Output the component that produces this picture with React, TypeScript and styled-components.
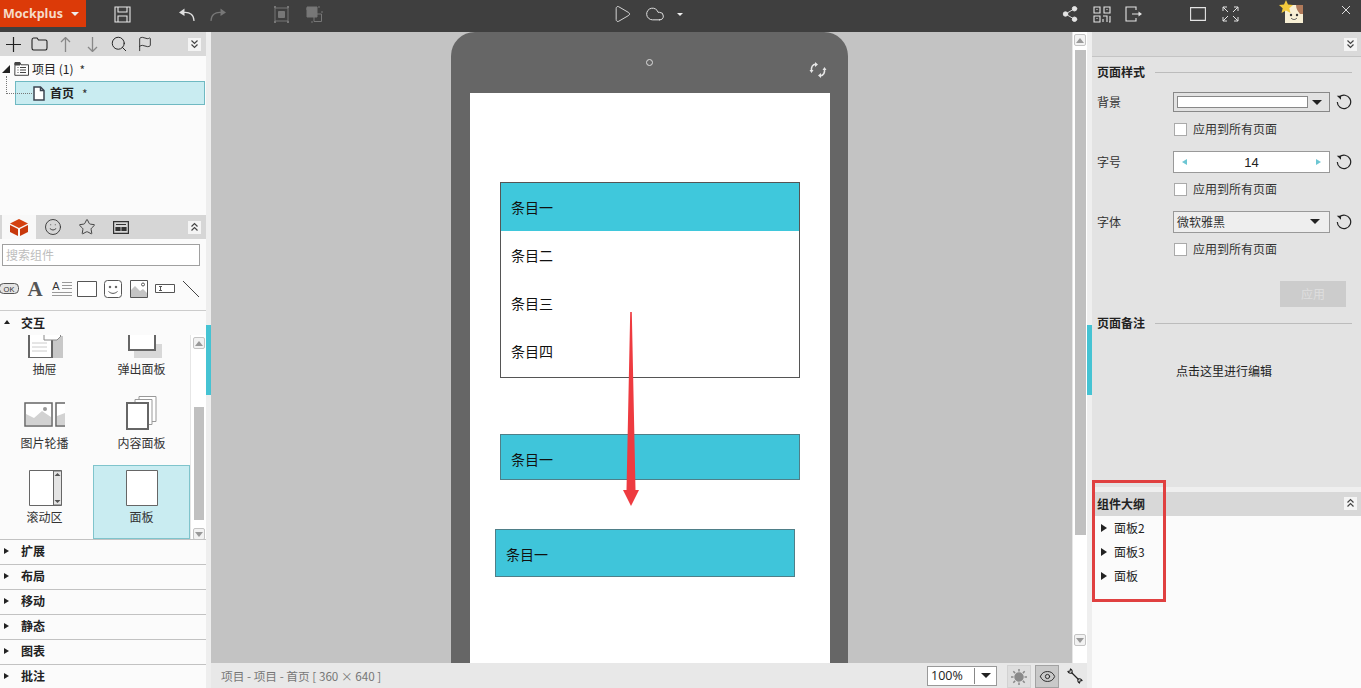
import React from "react";
import styled, { createGlobalStyle } from "styled-components";
import { Flag, Search, Share2, Smile, Star, Eye, Play, Cloud } from "lucide-react";

const GlobalStyle = createGlobalStyle`
  html, body {
    margin: 0;
    padding: 0;
    overflow: hidden;
    background: #c3c3c3;
  }
  * {
    box-sizing: border-box;
  }
  body {
    font-family: "Noto Sans CJK SC", "Liberation Sans", sans-serif;
    font-size: 12px;
    color: #222;
  }
`;

const Page = styled.div`
  width: 1361px;
  height: 688px;
  display: flex;
  flex-direction: column;
  overflow: hidden;
`;

const TopBar = styled.header`
  height: 32px;
  flex: none;
  background: #3f3f3f;
  display: flex;
  align-items: center;
  padding-bottom: 4px;
`;

const Logo = styled.div`
  width: 86px;
  height: 27px;
  align-self: flex-start;
  background: #dc3a08;
  color: #f6dcc8;
  font-family: "Open Sans", "Liberation Sans", sans-serif;
  font-weight: 700;
  font-size: 12.5px;
  display: flex;
  align-items: center;
  padding-left: 3px;
  gap: 8px;
`;

const Caret = styled.span<{ $color?: string; $size?: number }>`
  width: 0;
  height: 0;
  border-left: ${(p) => p.$size ?? 4}px solid transparent;
  border-right: ${(p) => p.$size ?? 4}px solid transparent;
  border-top: ${(p) => p.$size ?? 4}px solid ${(p) => p.$color ?? "#eee"};
`;

const TopSlot = styled.div<{ $ml: number }>`
  width: 24px;
  height: 24px;
  margin-left: ${(p) => p.$ml}px;
  display: flex;
  align-items: center;
  justify-content: center;
  svg {
    overflow: visible;
  }
`;

const Body = styled.div`
  flex: 1;
  min-height: 0;
  display: flex;
`;

const LeftPanel = styled.aside`
  width: 206px;
  flex: none;
  background: #fbfbfb;
  display: flex;
  flex-direction: column;
`;

const Splitter = styled.div`
  width: 5px;
  flex: none;
  background: #eeeeee;
  position: relative;
`;

const SplitterMark = styled.div`
  position: absolute;
  left: 0;
  top: 293px;
  width: 5px;
  height: 70px;
  background: #45c3d3;
`;

const ToolRow = styled.div`
  height: 24px;
  flex: none;
  background: #d9d9d9;
  display: flex;
  align-items: center;
  padding-left: 2px;
  gap: 4.4px;
`;

const ToolSlot = styled.div`
  width: 22px;
  height: 22px;
  display: flex;
  align-items: center;
  justify-content: center;
`;

const CollapseBtn = styled.div<{ $mr?: number }>`
  width: 13px;
  height: 13px;
  background: #f4f4f4;
  margin-left: auto;
  margin-right: ${(p) => p.$mr ?? 5}px;
  display: flex;
  align-items: center;
  justify-content: center;
`;

const Tree = styled.div`
  height: 159px;
  flex: none;
  padding-top: 5px;
  position: relative;
`;

const TreeConnector = styled.div`
  position: absolute;
  left: 6px;
  top: 20px;
  width: 26px;
  height: 18px;
  border-left: 1px dotted #777;
  border-bottom: 1px dotted #777;
`;

const TreeRow = styled.div`
  height: 16px;
  display: flex;
  align-items: center;
  padding-left: 2px;
`;

const TreeFolder = styled.span`
  margin-left: 4px;
  display: flex;
`;

const TreeLabel = styled.span`
  margin: -2px 0 0 3px;
  font-size: 12px;
`;

const Mark = styled.span<{ $ml: number }>`
  margin-left: ${(p) => p.$ml}px;
  font-size: 12px;
  color: #333;
`;

const TreeSelected = styled.div`
  height: 24px;
  width: 190px;
  margin: 4px 0 0 15px;
  background: #c9ecf1;
  border: 1px solid #6fb9c2;
  display: flex;
  align-items: center;
  padding-left: 17px;
`;

const TreeSelectedLabel = styled.span`
  margin: -2px 0 0 5px;
  font-weight: 700;
`;

const TabRow = styled.div`
  height: 24px;
  flex: none;
  background: #d6d6d6;
  display: flex;
  align-items: center;
  padding-left: 2px;
`;

const Tab = styled.div<{ $active?: boolean }>`
  width: 34px;
  height: 24px;
  background: ${(p) => (p.$active ? "#f8f8f8" : "transparent")};
  display: flex;
  align-items: center;
  justify-content: center;
`;

const SearchBox = styled.div`
  height: 22px;
  width: 198px;
  flex: none;
  margin: 5px 0 0 2px;
  padding: 0 0 2px 3px;
  background: #fff;
  border: 1px solid #a0a0a0;
  color: #bdbdbd;
  font-size: 12px;
  display: flex;
  align-items: center;
`;

const PaletteRow = styled.div`
  height: 45px;
  flex: none;
  margin-left: -4px;
  display: flex;
  align-items: center;
  padding-top: 1px;
  border-bottom: 1px solid #cccccc;
`;

const PaletteSlot = styled.div`
  width: 26px;
  height: 26px;
  flex: none;
  display: flex;
  align-items: center;
  justify-content: center;
`;

const GroupTitle = styled.div`
  height: 24px;
  flex: none;
  display: flex;
  align-items: center;
  font-weight: 700;
  padding: 0 0 2px 4px;
  gap: 11px;
`;

const SmallArrow = styled.span<{ $open?: boolean }>`
  width: 0;
  height: 0;
  flex: none;
  ${(p) =>
    p.$open
      ? "border-left: 3px solid transparent; border-right: 3px solid transparent; border-bottom: 4px solid #222;"
      : "border-top: 3px solid transparent; border-bottom: 3px solid transparent; border-left: 5px solid #222;"}
`;

const Scroller = styled.div`
  height: 204px;
  flex: none;
  display: flex;
`;

const WidgetArea = styled.div`
  width: 190px;
  overflow: hidden;
  display: flex;
  flex-direction: column;
  justify-content: flex-end;
`;

const WidgetGrid = styled.div`
  display: grid;
  grid-template-columns: 93px 97px;
  grid-auto-rows: 74px;
  flex: none;
`;

const WidgetCell = styled.div<{ $selected?: boolean; $left?: boolean }>`
  background: ${(p) => (p.$selected ? "#c9ecf1" : "transparent")};
  box-shadow: ${(p) => (p.$selected ? "inset 0 0 0 1px #7fc4cc" : "none")};
  display: flex;
  flex-direction: column;
  align-items: center;
  padding: 5px ${(p) => (p.$left ? 4 : 0)}px 0 0;
`;

const WidgetLabel = styled.div`
  margin-top: 2px;
  font-size: 12px;
  line-height: 18px;
  color: #333;
`;

const ScrollTrack = styled.div<{ $width: number }>`
  width: ${(p) => p.$width}px;
  flex: none;
  background: #ffffff;
  border-left: 1px solid #e6e6e6;
  display: flex;
  flex-direction: column;
  align-items: center;
  padding: 2px 0 1px;
`;

const ScrollBtn = styled.div`
  width: 12px;
  height: 12px;
  flex: none;
  background: #f2f2f2;
  border: 1px solid #c4c4c4;
  border-radius: 2px;
  display: flex;
  align-items: center;
  justify-content: center;
`;

const ThumbGap = styled.div<{ $h: number }>`
  height: ${(p) => p.$h}px;
  flex: none;
`;

const Thumb = styled.div<{ $h: number; $w: number }>`
  width: ${(p) => p.$w}px;
  height: ${(p) => p.$h}px;
  flex: none;
  background: #c0c0c0;
`;

const AccordionRow = styled.div`
  height: 25px;
  flex: none;
  border-top: 1px solid #c2c2c2;
  display: flex;
  align-items: center;
  padding: 0 0 3px 4px;
  gap: 12px;
  font-weight: 700;
`;

const Center = styled.main`
  width: 876px;
  flex: none;
  display: flex;
  flex-direction: column;
`;

const CanvasRow = styled.div`
  height: 631px;
  flex: none;
  display: flex;
`;

const Canvas = styled.div`
  width: 861px;
  flex: none;
  overflow: hidden;
  background: #c3c3c3;
  padding-left: 240px;
`;

const Phone = styled.div`
  width: 397px;
  height: 720px;
  background: #666666;
  border-radius: 24px 24px 0 0;
  padding: 61px 0 0 19px;
  position: relative;
`;

const Camera = styled.div`
  position: absolute;
  left: 195px;
  top: 27px;
  width: 7px;
  height: 7px;
  border-radius: 50%;
  border: 1.5px solid #ddd;
`;

const RotateMark = styled.div`
  position: absolute;
  left: 358px;
  top: 30px;
`;

const Screen = styled.div`
  width: 360px;
  height: 640px;
  background: #fff;
  padding-top: 89px;
  position: relative;
`;

const ArrowMark = styled.svg`
  position: absolute;
  left: 153px;
  top: 219px;
`;

const ItemList = styled.div`
  width: 300px;
  height: 196px;
  margin-left: 30px;
  border: 1px solid #555;
  display: flex;
  flex-direction: column;
`;

const ItemRow = styled.div<{ $active?: boolean }>`
  height: 48px;
  flex: none;
  padding-left: 10px;
  display: flex;
  align-items: center;
  font-size: 14px;
  color: #111;
  background: ${(p) => (p.$active ? "#3fc8dc" : "transparent")};
`;

const ItemBar = styled.div<{ $h: number; $mt: number; $ml: number; $pt: number }>`
  width: 300px;
  height: ${(p) => p.$h}px;
  margin: ${(p) => p.$mt}px 0 0 ${(p) => p.$ml}px;
  padding: ${(p) => p.$pt}px 0 0 10px;
  border: 1px solid #4f7f88;
  background: #3fc5da;
  display: flex;
  align-items: center;
  font-size: 14px;
  color: #111;
`;

const StatusBar = styled.footer`
  height: 25px;
  flex: none;
  background: #e8e8e8;
  display: flex;
  align-items: center;
  padding-left: 10px;
  color: #777;
`;

const StatusText = styled.span`
  width: 706px;
  flex: none;
  font-size: 11.7px;
`;

const ZoomBox = styled.div`
  width: 70px;
  height: 20px;
  flex: none;
  background: #fff;
  border: 1px solid #999;
  display: flex;
  align-items: center;
  padding-left: 3px;
  color: #222;
  font-family: "Open Sans", "Liberation Sans", sans-serif;
  font-size: 12.5px;
`;

const ZoomValue = styled.span`
  width: 44px;
  flex: none;
  height: 16px;
  line-height: 16px;
  border-right: 1px solid #888;
`;

const ZoomCaret = styled.span`
  flex: 1;
  display: flex;
  justify-content: center;
`;

const StatusBtn = styled.div<{ $on?: boolean; $ml: number }>`
  width: 24px;
  height: 23px;
  flex: none;
  margin-left: ${(p) => p.$ml}px;
  margin-top: 2px;
  background: ${(p) => (p.$on ? "#c9c9c9" : "#dedede")};
  border: 1px solid ${(p) => (p.$on ? "#a2a2a2" : "#d2d2d2")};
  display: flex;
  align-items: center;
  justify-content: center;
`;

const PlainBtn = styled.div`
  margin-left: 8px;
  display: flex;
  align-items: center;
`;

const RightWrap = styled.div`
  width: 274px;
  flex: none;
  display: flex;
  position: relative;
`;

const RightGutter = styled.div`
  width: 5px;
  flex: none;
  background: #efefef;
  position: relative;
`;

const GutterMark = styled.div`
  position: absolute;
  left: 0;
  top: 293px;
  width: 5px;
  height: 70px;
  background: #45c3d3;
`;

const RightPanel = styled.aside`
  flex: 1;
  display: flex;
  flex-direction: column;
  background: #e3e3e3;
`;

const PropsTop = styled.div`
  height: 25px;
  flex: none;
  background: #dadada;
  border-bottom: 1px solid #c4c4c4;
  display: flex;
  align-items: center;
`;

const PropsBody = styled.div`
  height: 430px;
  flex: none;
  padding: 7px 9px 0 5px;
`;

const SectionTitle = styled.div<{ $mt?: number }>`
  height: 16px;
  margin-top: ${(p) => p.$mt ?? 0}px;
  display: flex;
  align-items: center;
  gap: 10px;
  font-weight: 700;
  font-size: 12px;
  &::after {
    content: "";
    flex: 1;
    height: 1px;
    background: #bcbcbc;
  }
`;

const SectionText = styled.span`
  margin-top: -2px;
`;

const FieldRow = styled.div<{ $h: number; $mt: number }>`
  height: ${(p) => p.$h}px;
  margin-top: ${(p) => p.$mt}px;
  display: flex;
  align-items: center;
`;

const FieldLabel = styled.span`
  width: 76px;
  flex: none;
  margin-top: -2px;
  font-size: 12px;
  color: #333;
`;

const ColorSelect = styled.div`
  width: 157px;
  height: 100%;
  flex: none;
  border: 1px solid #888;
  background: #e2e2e2;
  padding: 3px;
  display: flex;
  align-items: center;
`;

const ColorSwatch = styled.div`
  width: 131px;
  height: 100%;
  background: #fff;
  border: 1px solid #888;
`;

const SelectCaret = styled.span`
  flex: 1;
  display: flex;
  justify-content: center;
`;

const Stepper = styled.div`
  width: 157px;
  height: 100%;
  flex: none;
  border: 1px solid #999;
  background: #fff;
  display: flex;
  align-items: center;
  justify-content: space-between;
  padding: 0 8px;
  font-family: "Liberation Sans", sans-serif;
  font-size: 13px;
`;

const StepArrow = styled.span<{ $dir: "left" | "right" }>`
  width: 0;
  height: 0;
  border-top: 3px solid transparent;
  border-bottom: 3px solid transparent;
  ${(p) => (p.$dir === "left" ? "border-right" : "border-left")}: 5px solid #6cc6d3;
`;

const FontSelect = styled.div`
  width: 157px;
  height: 100%;
  flex: none;
  border: 1px solid #999;
  background: #eeeeee;
  display: flex;
  align-items: center;
  padding: 0 9px 2px 3px;
  justify-content: space-between;
  font-size: 12px;
  color: #333;
`;

const ResetSlot = styled.div`
  margin-left: 6px;
  display: flex;
  align-items: center;
`;

const CheckRow = styled.div<{ $mt: number }>`
  height: 14px;
  margin: ${(p) => p.$mt}px 0 0 77px;
  display: flex;
  align-items: center;
  gap: 6px;
  font-size: 12px;
  color: #333;
`;

const CheckBox = styled.span`
  width: 13px;
  height: 13px;
  flex: none;
  background: #fff;
  border: 1px solid #aaa;
`;

const CheckText = styled.span`
  margin-top: -2px;
`;

const ApplyRow = styled.div`
  margin-top: 25px;
  display: flex;
  justify-content: flex-end;
  padding-right: 6px;
`;

const ApplyBtn = styled.div`
  width: 66px;
  height: 26px;
  padding-bottom: 2px;
  background: #cccccc;
  color: #dedede;
  font-size: 12px;
  display: flex;
  align-items: center;
  justify-content: center;
`;

const NoteHint = styled.div`
  margin: 32px 0 0 79px;
  height: 16px;
  line-height: 16px;
  font-size: 12px;
  color: #222;
`;

const LightStrip = styled.div`
  height: 5px;
  flex: none;
  background: #efefef;
`;

const OutlineHead = styled.div`
  height: 24px;
  flex: none;
  background: #d8d8d8;
  display: flex;
  align-items: center;
  padding: 0 0 2px 5px;
  font-weight: 700;
  font-size: 12px;
`;

const OutlineBody = styled.div`
  flex: 1;
  background: #fbfbfb;
  padding-left: 9px;
`;

const OutlineRow = styled.div`
  height: 24px;
  display: flex;
  align-items: center;
  gap: 7px;
  font-size: 12px;
  color: #222;
`;

const OutlineArrow = styled.span`
  width: 0;
  height: 0;
  flex: none;
  border-top: 4px solid transparent;
  border-bottom: 4px solid transparent;
  border-left: 6px solid #222;
`;

const OutlineText = styled.span`
  margin-top: -1px;
`;

const Highlight = styled.div`
  position: absolute;
  left: 5px;
  top: 448px;
  width: 74px;
  height: 122px;
  border: 3px solid #e04040;
  pointer-events: none;
`;

const FolderTreeIcon = () => (
  <svg width="15" height="14" viewBox="0 0 15 14" fill="none" stroke="#444">
    <path d="M1 .8h5l1 2h7.5v10.5H.8z" fill="#fff" />
    <path d="M1 .5h5v2.5H1z" fill="#444" />
    <path d="M3.5 5.5h1M6 5.5h6M3.5 8h1M6 8h6M3.5 10.5h1M6 10.5h6" />
  </svg>
);

const PageIcon = () => (
  <svg width="12" height="15" viewBox="0 0 12 15" fill="#fff" stroke="#3c4450" strokeWidth="1.5">
    <path d="M1 1h6.5L11 4.5V14H1z" />
    <path d="M7.5 1v3.5H11" fill="none" />
  </svg>
);

const CollapseIcon = ({ up }: { up?: boolean }) => (
  <svg width="9" height="10" viewBox="0 0 9 10" fill="none" stroke="#444" strokeWidth="1.2">
    {up ? <path d="M1.5 4.5 4.5 1.5l3 3M1.5 8.5l3-3 3 3" /> : <path d="M1.5 1.5l3 3 3-3M1.5 5.5l3 3 3-3" />}
  </svg>
);

const ResetIcon = () => (
  <svg width="16" height="16" viewBox="0 0 16 16" fill="none" stroke="#222" strokeWidth="1.2">
    <path d="M3.4 3A6.7 6.7 0 1 1 1.3 8" />
    <path d="M.8 1.8h4.2v4z" fill="#222" stroke="none" />
  </svg>
);

const BtnArrow = ({ up }: { up?: boolean }) => (
  <svg width="8" height="5" viewBox="0 0 8 5" fill="#999">
    <path d={up ? "M4 0l4 5H0z" : "M0 0h8L4 5z"} />
  </svg>
);

const topIcons = [
  {
    ml: 24,
    icon: (
      <svg width="17" height="17" viewBox="0 0 17 17" fill="none" stroke="#e8e8e8" strokeWidth="1.1">
        <path d="M1 1h15v15H1zM4 1v5h9V1M4 16v-6h9v6" />
      </svg>
    ),
  },
  {
    ml: 40,
    icon: (
      <svg width="17" height="15" viewBox="0 0 17 15" fill="none" stroke="#e0e0e0" strokeWidth="1.2">
        <path d="M16 14c0-6-4-9-10-8.5" />
        <path d="M6.5 1.5 1 5.5 6.5 9z" fill="#e0e0e0" stroke="none" />
      </svg>
    ),
  },
  {
    ml: 8,
    icon: (
      <svg width="17" height="15" viewBox="0 0 17 15" fill="none" stroke="#777" strokeWidth="1.2">
        <path d="M1 14c0-6 4-9 10-8.5" />
        <path d="M10.5 1.500 16 5.500 10.500 9z" fill="#777" stroke="none" />
      </svg>
    ),
  },
  {
    ml: 39,
    icon: (
      <svg width="17" height="17" viewBox="0 0 17 17" fill="none" stroke="#777">
        <path d="M2 2h13v13H2z" />
        <path d="M5.5 5.5h6v6h-6z" fill="#777" />
        <path d="M1 1h2M14 1h2M1 16h2M14 16h2" strokeWidth="2" />
      </svg>
    ),
  },
  {
    ml: 9,
    icon: (
      <svg width="17" height="17" viewBox="0 0 17 17" fill="none" stroke="#777">
        <path d="M1 1h10v10H1z" fill="#777" />
        <path d="M8 8h7.5v7.5H8z" />
        <path d="M0 3h2M13 0v2M15 6h2M6 15v2" />
      </svg>
    ),
  },
  { ml: 284, icon: <Play size={20} color="#e0e0e0" strokeWidth={1.1} /> },
  { ml: 9, icon: <Cloud size={20} color="#e0e0e0" strokeWidth={1.2} /> },
  { ml: 1, icon: <Caret $size={3} /> },
  { ml: 366, icon: <Share2 size={18} color="#e4e4e4" fill="#e4e4e4" strokeWidth={1.2} /> },
  {
    ml: 8,
    icon: (
      <svg width="18" height="17" viewBox="0 0 18 17" fill="none" stroke="#e4e4e4" strokeWidth="1.1">
        <path d="M1 1h6v6H1zM11 1h6v6h-6zM1 10h6v6H1zM3.5 3.5h1M13.5 3.5h1M3.5 12.5h1M10 10h4v6M17 10v6h-1M10 13v3" />
      </svg>
    ),
  },
  {
    ml: 7,
    icon: (
      <svg width="17" height="16" viewBox="0 0 17 16" fill="none" stroke="#e4e4e4" strokeWidth="1.1">
        <path d="M11 4V1H1v14h10v-3M7 8h8" />
        <path d="M13.5 5.5 17 8l-3.5 2.5z" fill="#e4e4e4" stroke="none" />
      </svg>
    ),
  },
  {
    ml: 41,
    icon: (
      <svg width="16" height="14" viewBox="0 0 16 14" fill="none" stroke="#e4e4e4" strokeWidth="1.1">
        <path d="M.6.6h14.8v12.8H.6z" />
      </svg>
    ),
  },
  {
    ml: 8,
    icon: (
      <svg width="17" height="16" viewBox="0 0 17 16" fill="none" stroke="#e4e4e4" strokeWidth="1">
        <path d="M1 5V1h4M1 1l5 5M12 1h4v4M16 1l-5 5M1 11v4h4M1 15l5-5M12 15h4v-4M16 15l-5-5" />
      </svg>
    ),
  },
  {
    ml: 39,
    icon: (
      <svg width="24" height="24" viewBox="0 2 24 24">
        <path d="M4 5h18v18H4z" fill="#f7efd4" />
        <path d="M15 5h7v9h-3c-2-3-4-5-4-9z" fill="#b07a5a" />
        <circle cx="10" cy="15" r="1.2" fill="#333" />
        <circle cx="16" cy="15" r="1.2" fill="#333" />
        <path d="M10 18c2 2 4 2 6 0" fill="none" stroke="#555" />
        <path d="M5 0l2 4.500 5 .5-3.700 3.200L9.500 13 5 10.500.5 13l1.200-4.800L-2 5l5-.5z" fill="#f2c93c" />
      </svg>
    ),
  },
  {
    ml: 29,
    icon: (
      <svg width="10" height="10" viewBox="0 4 10 10" stroke="#ddd">
        <path d="M1 1l8 8M9 1l-8 8" />
      </svg>
    ),
  },
];

const toolIcons = [
  <svg key="add" width="15" height="15" viewBox="0 0 15 15" stroke="#222" strokeWidth="1.2">
    <path d="M7.5 0v15M0 7.5h15" />
  </svg>,
  <svg key="folder" width="17" height="14" viewBox="0 0 17 14" fill="none" stroke="#222" strokeWidth="1.1">
    <path d="M1 3c0-1 .5-2 1.500-2H6l1.500 2h7c1 0 1.500.5 1.500 1.500V11c0 1-.5 2-1.500 2h-12C1.500 13 1 12 1 11z" />
  </svg>,
  <svg key="up" width="11" height="15" viewBox="0 0 11 15" fill="none" stroke="#888" strokeWidth="1.3">
    <path d="M5.5 15V1M1 5l4.500-4.500L10 5" />
  </svg>,
  <svg key="down" width="11" height="15" viewBox="0 0 11 15" fill="none" stroke="#888" strokeWidth="1.3">
    <path d="M5.5 0v14M1 10l4.500 4.500L10 10" />
  </svg>,
  <Search key="search" size={18} color="#222" strokeWidth={1.3} />,
  <Flag key="flag" size={16} color="#222" strokeWidth={1.3} />,
];

const paletteIcons = [
  <svg key="ok" width="20" height="11" viewBox="0 0 20 11">
    <rect x=".5" y=".5" width="19" height="10" rx="4" fill="#e4e4e4" stroke="#555" />
    <text x="10" y="8.5" fontSize="7.5" textAnchor="middle" fill="#333" fontFamily="Liberation Sans">OK</text>
  </svg>,
  <svg key="a" width="22" height="22" viewBox="0 0 22 22">
    <text x="11" y="18" fontSize="21" fontWeight="700" textAnchor="middle" fill="#555" fontFamily="Liberation Serif">A</text>
  </svg>,
  <svg key="alines" width="21" height="18" viewBox="0 0 21 18" stroke="#999">
    <text x="5" y="10" fontSize="11" textAnchor="middle" fill="#333" stroke="none" fontFamily="Liberation Sans">A</text>
    <path d="M11 2.500h10M11 5.500h10M11 8.500h10M1 12.500h20M1 15.500h20" />
  </svg>,
  <svg key="rect" width="20" height="16" viewBox="0 0 20 16" fill="#fff" stroke="#555">
    <path d="M.5.5h19v15H.5z" />
  </svg>,
  <svg key="face" width="18" height="18" viewBox="0 0 18 18" fill="#fff" stroke="#555">
    <rect x=".5" y=".5" width="17" height="17" rx="3" />
    <circle cx="6" cy="7" r=".8" fill="#555" />
    <circle cx="12" cy="7" r=".8" fill="#555" />
    <path d="M4.5 11.5c3 2.500 6 2.500 9 0" fill="none" />
  </svg>,
  <svg key="image" width="18" height="18" viewBox="0 0 18 18" fill="#fff" stroke="#555">
    <path d="M.5.5h17v17H.5z" />
    <path d="M1 17V10l4-4 5 5 3-2 4 4v4z" fill="#c4c4c4" stroke="none" />
    <circle cx="13" cy="4.5" r="1.5" fill="#fff" />
  </svg>,
  <svg key="input" width="20" height="9" viewBox="0 0 20 9" fill="#fff" stroke="#555">
    <path d="M.5.5h19v8H.5z" />
    <path d="M4 2.500h3M5.500 2.500v4M4 6.500h3" fill="none" />
  </svg>,
  <svg key="line" width="18" height="18" viewBox="0 0 18 18" stroke="#444">
    <path d="M1 1l16 16" />
  </svg>,
];

const widgets = [
  {
    name: "抽屉",
    icon: (
      <svg width="44" height="36" viewBox="0 0 44 36">
        <path d="M16 14h24v22H16z" fill="#c8c8c8" />
        <path d="M6 10h23v26H6z" fill="#fff" stroke="#666" strokeWidth="2" />
        <path d="M9 21h15M9 25h15M9 29h15" stroke="#ccc" />
        <path d="M21 10h13l4 4-4 4H21z" fill="#fff" stroke="#888" />
      </svg>
    ),
  },
  {
    name: "弹出面板",
    icon: (
      <svg width="44" height="36" viewBox="0 0 44 36">
        <path d="M14 22h28v14H14z" fill="#d8d8d8" />
        <path d="M9 5h26v23H9z" fill="#fff" stroke="#666" strokeWidth="2" />
      </svg>
    ),
  },
  {
    name: "图片轮播",
    icon: (
      <svg width="44" height="36" viewBox="0 0 44 36">
        <path d="M2 7h27v23H2z" fill="#fff" stroke="#666" strokeWidth="1.5" />
        <path d="M3 29V18l8 4 8-7 9 6v8z" fill="#d2d2d2" />
        <circle cx="22" cy="13" r="2" fill="#999" />
        <path d="M42 7h-9v23h9" fill="#fff" stroke="#666" strokeWidth="1.5" />
        <path d="M34 29V20l8-3v12z" fill="#d2d2d2" />
      </svg>
    ),
  },
  {
    name: "内容面板",
    icon: (
      <svg width="44" height="36" viewBox="0 0 44 36" fill="#fff">
        <path d="M19 .5h17v25H19z" stroke="#999" />
        <path d="M15 3.5h17v25H15z" stroke="#999" />
        <path d="M7 7h21v26H7z" stroke="#666" strokeWidth="2" />
      </svg>
    ),
  },
  {
    name: "滚动区",
    icon: (
      <svg width="44" height="36" viewBox="0 0 44 36" fill="#fff">
        <path d="M6.500.5h32v35h-32z" stroke="#666" />
        <path d="M30.500 1h8v34h-8z" fill="#e4e4e4" stroke="#666" />
        <path d="M34.500 3l3 3h-6zM31.500 30h6l-3 3z" fill="#555" />
      </svg>
    ),
  },
  {
    name: "面板",
    selected: true,
    icon: (
      <svg width="44" height="36" viewBox="0 0 44 36">
        <path d="M6.500.5h31v35h-31z" fill="#fff" stroke="#666" />
      </svg>
    ),
  },
];

const groups = ["扩展", "布局", "移动", "静态", "图表", "批注"];
const listItems = ["条目一", "条目二", "条目三", "条目四"];
const outline = ["面板2", "面板3", "面板"];

export const App = () => {
  return (
    <Page>
      <GlobalStyle />
      <TopBar>
        <Logo>
          Mockplus
          <Caret $size={4} />
        </Logo>
        {topIcons.map((item, i) => (
          <TopSlot key={i} $ml={item.ml}>
            {item.icon}
          </TopSlot>
        ))}
      </TopBar>
      <Body>
        <LeftPanel>
          <ToolRow>
            {toolIcons.map((icon, i) => (
              <ToolSlot key={i}>{icon}</ToolSlot>
            ))}
            <CollapseBtn>
              <CollapseIcon />
            </CollapseBtn>
          </ToolRow>
          <Tree>
            <TreeConnector />
            <TreeRow>
              <svg width="8" height="8" viewBox="0 0 8 8" fill="#222">
                <path d="M8 0v8H0z" />
              </svg>
              <TreeFolder>
                <FolderTreeIcon />
              </TreeFolder>
              <TreeLabel>项目 (1)</TreeLabel>
              <Mark $ml={6}>*</Mark>
            </TreeRow>
            <TreeSelected>
              <PageIcon />
              <TreeSelectedLabel>首页</TreeSelectedLabel>
              <Mark $ml={8}>*</Mark>
            </TreeSelected>
          </Tree>
          <TabRow>
            <Tab $active>
              <svg width="18" height="17" viewBox="0 0 18 17">
                <path d="M9 0l9 4.500-9 4.500-9-4.500z" fill="#d4400f" />
                <path d="M0 6l8 4v7l-8-4zM18 6l-8 4v7l8-4z" fill="#c8380c" />
              </svg>
            </Tab>
            <Tab>
              <Smile size={18} color="#333" strokeWidth={1.2} />
            </Tab>
            <Tab>
              <Star size={18} color="#333" strokeWidth={1.2} />
            </Tab>
            <Tab>
              <svg width="16" height="13" viewBox="0 0 16 13" fill="none" stroke="#333" strokeWidth="1.2">
                <path d="M.6.6h14.800v11.800H.6z" />
                <path d="M3 3.500h10M3 6.500h4v3H3zM9 6.500h4v3H9z" fill="#333" />
              </svg>
            </Tab>
            <CollapseBtn>
              <CollapseIcon up />
            </CollapseBtn>
          </TabRow>
          <SearchBox>搜索组件</SearchBox>
          <PaletteRow>
            {paletteIcons.map((icon, i) => (
              <PaletteSlot key={i}>{icon}</PaletteSlot>
            ))}
          </PaletteRow>
          <GroupTitle>
            <SmallArrow $open />
            交互
          </GroupTitle>
          <Scroller>
            <WidgetArea>
              <WidgetGrid>
                {widgets.map((w, i) => (
                  <WidgetCell key={w.name} $selected={w.selected} $left={i % 2 === 0}>
                    {w.icon}
                    <WidgetLabel>{w.name}</WidgetLabel>
                  </WidgetCell>
                ))}
              </WidgetGrid>
            </WidgetArea>
            <ScrollTrack $width={16}>
              <ScrollBtn>
                <BtnArrow up />
              </ScrollBtn>
              <ThumbGap $h={58} />
              <Thumb $h={113} $w={10} />
              <ThumbGap $h={8} />
              <ScrollBtn>
                <BtnArrow />
              </ScrollBtn>
            </ScrollTrack>
          </Scroller>
          {groups.map((g) => (
            <AccordionRow key={g}>
              <SmallArrow />
              {g}
            </AccordionRow>
          ))}
        </LeftPanel>
        <Splitter>
          <SplitterMark />
        </Splitter>
        <Center>
          <CanvasRow>
            <Canvas>
              <Phone>
                <Camera />
                <RotateMark>
                  <svg width="18" height="16" viewBox="0 0 18 16" fill="none" stroke="#e6e6e6" strokeWidth="1.5">
                    <path d="M7 2C3.500 2.500 2 5 2.500 9" />
                    <path d="M6 0l3 2.500L6 5zM.5 8h4l-2 3z" fill="#e6e6e6" stroke="none" />
                    <path d="M11 14c3.500-.5 5-3 4.500-7" />
                    <path d="M12 16l-3-2.500L12 11zM17.500 8h-4l2-3z" fill="#e6e6e6" stroke="none" />
                  </svg>
                </RotateMark>
                <Screen>
                  <ItemList>
                    {listItems.map((item, i) => (
                      <ItemRow key={item} $active={i === 0}>
                        {item}
                      </ItemRow>
                    ))}
                  </ItemList>
                  <ItemBar $h={46} $mt={56} $ml={30} $pt={3}>
                    条目一
                  </ItemBar>
                  <ItemBar $h={48} $mt={49} $ml={25} $pt={1}>
                    条目一
                  </ItemBar>
                  <ArrowMark width="16" height="194" viewBox="0 0 16 194">
                    <path d="M7.200 0h1.600l3.700 178H16l-8 16-8-16h3.500z" fill="#ee3b40" />
                  </ArrowMark>
                </Screen>
              </Phone>
            </Canvas>
            <ScrollTrack $width={15}>
              <ScrollBtn>
                <BtnArrow up />
              </ScrollBtn>
              <ThumbGap $h={4} />
              <Thumb $h={485} $w={11} />
              <ThumbGap $h={99} />
              <ScrollBtn>
                <BtnArrow />
              </ScrollBtn>
            </ScrollTrack>
          </CanvasRow>
          <StatusBar>
            <StatusText>项目 - 项目 - 首页 [ 360 × 640 ]</StatusText>
            <ZoomBox>
              <ZoomValue>100%</ZoomValue>
              <ZoomCaret>
                <Caret $color="#222" $size={5} />
              </ZoomCaret>
            </ZoomBox>
            <StatusBtn $ml={10}>
              <svg width="16" height="16" viewBox="0 0 16 16" stroke="#8a8a8a" strokeWidth="1.5">
                <circle cx="8" cy="8" r="4" fill="#8a8a8a" />
                <path d="M8 0v2.500M8 13.500V16M0 8h2.500M13.500 8H16M2.300 2.300l1.800 1.800M11.900 11.900l1.800 1.800M13.700 2.300l-1.800 1.800M4.100 11.900l-1.800 1.800" />
              </svg>
            </StatusBtn>
            <StatusBtn $on $ml={4}>
              <Eye size={17} color="#222" strokeWidth={1.3} />
            </StatusBtn>
            <PlainBtn>
              <svg width="16" height="16" viewBox="0 0 16 16" fill="none" stroke="#222" strokeWidth="1.1">
                <path d="M4.500 4.500l7 7" strokeWidth="1.300" />
                <path d="M1 3.500A2.800 2.800 0 0 0 4.800 5 2.800 2.800 0 0 0 3.500 1L3 3z" />
                <path d="M15 12.500A2.800 2.800 0 0 0 11.200 11 2.800 2.800 0 0 0 12.500 15L13 13z" />
              </svg>
            </PlainBtn>
          </StatusBar>
        </Center>
        <RightWrap>
          <RightGutter>
            <GutterMark />
          </RightGutter>
          <RightPanel>
            <PropsTop>
              <CollapseBtn $mr={4}>
                <CollapseIcon />
              </CollapseBtn>
            </PropsTop>
            <PropsBody>
              <SectionTitle>
                <SectionText>页面样式</SectionText>
              </SectionTitle>
              <FieldRow $h={20} $mt={12}>
                <FieldLabel>背景</FieldLabel>
                <ColorSelect>
                  <ColorSwatch />
                  <SelectCaret>
                    <Caret $color="#222" $size={5} />
                  </SelectCaret>
                </ColorSelect>
                <ResetSlot>
                  <ResetIcon />
                </ResetSlot>
              </FieldRow>
              <CheckRow $mt={10}>
                <CheckBox />
                <CheckText>应用到所有页面</CheckText>
              </CheckRow>
              <FieldRow $h={22} $mt={15}>
                <FieldLabel>字号</FieldLabel>
                <Stepper>
                  <StepArrow $dir="left" />
                  14
                  <StepArrow $dir="right" />
                </Stepper>
                <ResetSlot>
                  <ResetIcon />
                </ResetSlot>
              </FieldRow>
              <CheckRow $mt={9}>
                <CheckBox />
                <CheckText>应用到所有页面</CheckText>
              </CheckRow>
              <FieldRow $h={22} $mt={15}>
                <FieldLabel>字体</FieldLabel>
                <FontSelect>
                  微软雅黑
                  <Caret $color="#222" $size={5} />
                </FontSelect>
                <ResetSlot>
                  <ResetIcon />
                </ResetSlot>
              </FieldRow>
              <CheckRow $mt={9}>
                <CheckBox />
                <CheckText>应用到所有页面</CheckText>
              </CheckRow>
              <ApplyRow>
                <ApplyBtn>应用</ApplyBtn>
              </ApplyRow>
              <SectionTitle $mt={8}>
                <SectionText>页面备注</SectionText>
              </SectionTitle>
              <NoteHint>点击这里进行编辑</NoteHint>
            </PropsBody>
            <LightStrip />
            <OutlineHead>
              组件大纲
              <CollapseBtn $mr={4}>
                <CollapseIcon up />
              </CollapseBtn>
            </OutlineHead>
            <OutlineBody>
              {outline.map((o) => (
                <OutlineRow key={o}>
                  <OutlineArrow />
                  <OutlineText>{o}</OutlineText>
                </OutlineRow>
              ))}
            </OutlineBody>
          </RightPanel>
          <Highlight />
        </RightWrap>
      </Body>
    </Page>
  );
};

export default App;
